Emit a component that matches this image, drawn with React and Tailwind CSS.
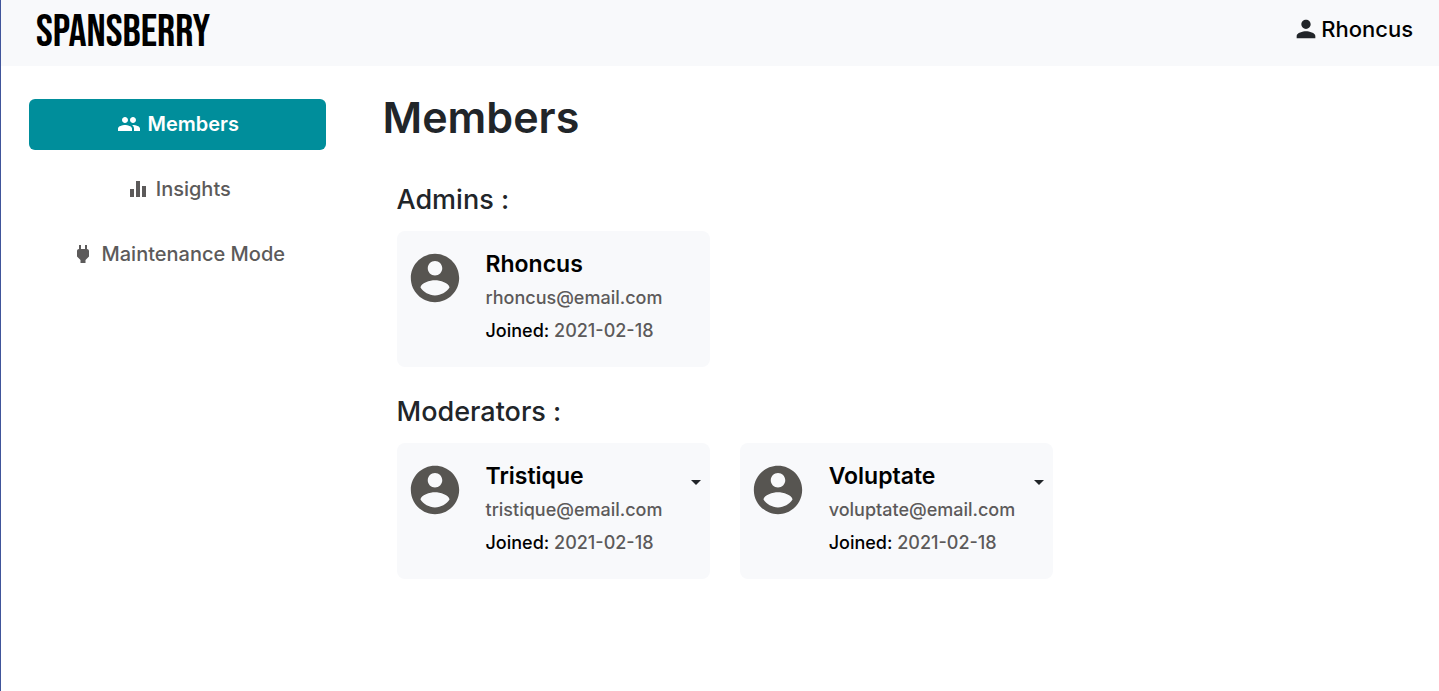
import React from 'react';
import { MdArrowDropDown, MdEqualizer, MdGroup, MdPerson, MdPower } from 'react-icons/md';

const navItems = [
  { label: 'Members', Icon: MdGroup, active: true },
  { label: 'Insights', Icon: MdEqualizer },
  { label: 'Maintenance Mode', Icon: MdPower },
];

const sections = [
  {
    title: 'Admins :',
    members: [{ name: 'Rhoncus', email: 'rhoncus@email.com', joined: '2021-02-18' }],
  },
  {
    title: 'Moderators :',
    hasMenu: true,
    members: [
      { name: 'Tristique', email: 'tristique@email.com', joined: '2021-02-18' },
      { name: 'Voluptate', email: 'voluptate@email.com', joined: '2021-02-18' },
    ],
  },
];

function Avatar() {
  return (
    <svg viewBox="0 0 24 24" className="size-[58px] shrink-0 fill-[#575551]" aria-hidden="true">
      <path d="M12 2C6.48 2 2 6.48 2 12s4.48 10 10 10 10-4.48 10-10S17.52 2 12 2zm0 3c1.66 0 3 1.34 3 3s-1.34 3-3 3-3-1.34-3-3 1.34-3 3-3zm0 14.2c-2.5 0-4.71-1.28-6-3.22.03-1.99 4-3.08 6-3.08 1.99 0 5.97 1.09 6 3.08-1.29 1.94-3.5 3.22-6 3.22z" />
    </svg>
  );
}

function MemberCard({ member, hasMenu }) {
  return (
    <li className="flex items-start rounded-lg bg-[#f8f9fb] pt-[18px] pr-[2px] pb-5 pl-[9px]">
      <Avatar />
      <div className="ml-[22px] min-w-0 flex-1">
        <h3 className="text-[23px] leading-[30px] font-semibold text-black">{member.name}</h3>
        <p className="mt-[2px] text-lg leading-[33px] font-medium text-[#5c5a5a]">{member.email}</p>
        <p className="text-lg leading-[33px] font-medium text-[#5c5a5a]">
          <span className="text-black">Joined:</span> {member.joined}
        </p>
      </div>
      {hasMenu && (
        <button type="button" aria-label={`Options for ${member.name}`} className="mt-[9px]">
          <MdArrowDropDown className="size-6" />
        </button>
      )}
    </li>
  );
}

export default function App() {
  return (
    <div className="min-h-screen border-l border-[#40559b] bg-white font-['Inter',sans-serif] text-[#212529]">
      <header className="flex h-[66px] items-center justify-between bg-[#f8f9fb] pr-[26px] pb-2 pl-[35px]">
        <a
          href="#"
          className="pt-2 font-['Bebas_Neue','Liberation_Sans_Narrow',sans-serif] text-[45px] leading-[54px] text-black"
        >
          SPANSBERRY
        </a>
        <a href="#" className="flex items-center gap-px text-[22px] font-medium text-black">
          <MdPerson className="size-7 text-[#212529]" />
          Rhoncus
        </a>
      </header>
      <div className="flex">
        <nav className="flex w-1/4 flex-col gap-[14px] pt-[33px] pr-[35px] pl-7">
          {navItems.map(({ label, Icon, active }) => (
            <a
              key={label}
              href="#"
              className={
                active
                  ? 'flex h-[51px] items-center justify-center gap-[6px] rounded-md bg-[#008e9b] pb-px pl-[2px] text-xl font-semibold text-white'
                  : 'flex h-[51px] items-center justify-center gap-[6px] rounded-md pb-px pl-[2px] text-xl font-medium text-[#5c5a5a]'
              }
            >
              <Icon className="size-6" />
              {label}
            </a>
          ))}
        </nav>
        <main className="flex-1 pt-6 pr-[43px] pl-[22px]">
          <h1 className="text-[43px] leading-[54px] font-semibold">Members</h1>
          <div className="mt-[11px] ml-[14px]">
            {sections.map((section) => (
              <section key={section.title} className="pt-[28px]">
                <h2 className="text-[27px] leading-[34px] font-medium">{section.title}</h2>
                <ul className="mt-[14px] grid grid-cols-3 gap-[30px]">
                  {section.members.map((member) => (
                    <MemberCard key={member.name} member={member} hasMenu={section.hasMenu} />
                  ))}
                </ul>
              </section>
            ))}
          </div>
        </main>
      </div>
    </div>
  );
}
